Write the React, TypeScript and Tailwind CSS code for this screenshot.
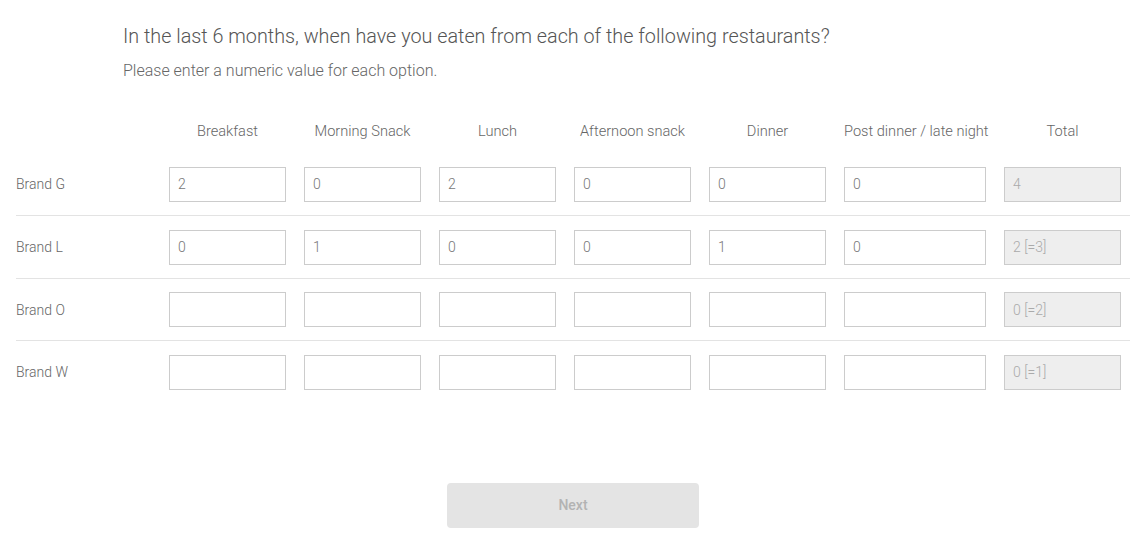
import React from 'react';

const columns = ['Breakfast', 'Morning Snack', 'Lunch', 'Afternoon snack', 'Dinner', 'Post dinner / late night'];

const rows: { brand: string; values: string[]; total: string }[] = [
  { brand: 'Brand G', values: ['2', '0', '2', '0', '0', '0'], total: '4' },
  { brand: 'Brand L', values: ['0', '1', '0', '0', '1', '0'], total: '2 [=3]' },
  { brand: 'Brand O', values: ['', '', '', '', '', ''], total: '0 [=2]' },
  { brand: 'Brand W', values: ['', '', '', '', '', ''], total: '0 [=1]' },
];

const gridCols = 'grid grid-cols-[135px_117px_117px_117px_117px_117px_142px_117px] gap-x-[18px] items-center';

const App: React.FC = () => {
  return (
    <div className="min-h-[545px] w-full bg-white pt-[23px] font-['Roboto',sans-serif] font-light">
      {/* Question */}
      <div className="pl-[123px]">
        <h1 className="text-[19.8px] leading-[28px] text-[#555555] font-light">
          In the last 6 months, when have you eaten from each of the following restaurants?
        </h1>
        <p className="mt-[9px] text-[16px] leading-[22px] text-[#666666]">
          Please enter a numeric value for each option.
        </p>
      </div>

      {/* Grid */}
      <div className="ml-[16px] mt-[39px] w-[1114px]">
        <div className={gridCols}>
          <div />
          {columns.map(col => (
            <div key={col} className="whitespace-nowrap text-center text-[14.6px] leading-[20px] text-[#666666]">
              {col}
            </div>
          ))}
          <div className="whitespace-nowrap text-center text-[14.6px] leading-[20px] text-[#666666]">Total</div>
        </div>

        <div className="mt-[12.3px]">
          {rows.map((row, i) => (
            <div
              key={row.brand}
              className={`${gridCols} pt-[13.67px] pb-[13px] ${i < rows.length - 1 ? 'border-b border-[#e3e3e3]' : ''}`}
            >
              <div className="text-[14px] leading-[20px] text-[#666666]">{row.brand}</div>
              {row.values.map((v, j) => (
                <input
                  key={j}
                  type="text"
                  defaultValue={v}
                  className="h-[35px] w-full border border-[#cccccc] bg-white px-[8px] text-[14px] font-light text-[#777777] outline-none"
                />
              ))}
              <input
                type="text"
                value={row.total}
                disabled
                readOnly
                className="h-[35px] w-full border border-[#cccccc] bg-[#eeeeee] px-[8px] text-[14px] font-light text-[#aaaaaa] outline-none"
              />
            </div>
          ))}
        </div>
      </div>

      {/* Next */}
      <div className="mt-[80px] flex justify-center">
        <button
          type="button"
          disabled
          className="h-[45px] w-[252px] rounded-[4px] bg-[#e4e4e4] text-[14px] font-medium text-[#b3b3b3]"
        >
          Next
        </button>
      </div>
    </div>
  );
};

export default App;
